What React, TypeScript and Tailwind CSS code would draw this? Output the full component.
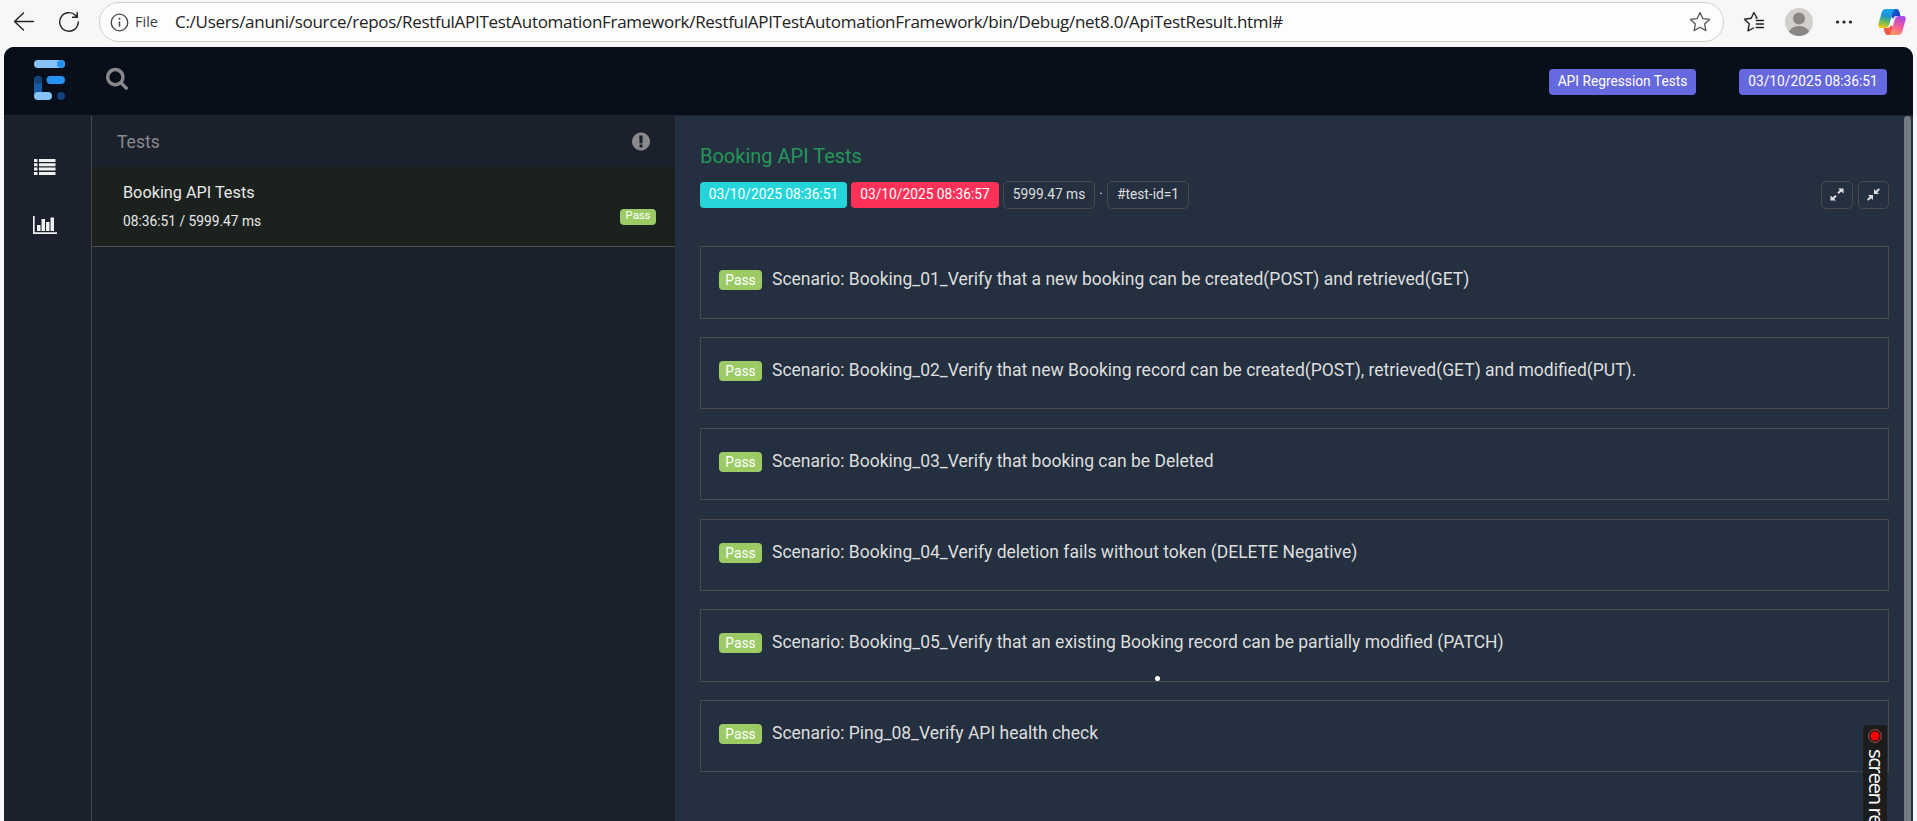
import type { ReactNode } from "react";

const scenarios = [
  "Booking_01_Verify that a new booking can be created(POST) and retrieved(GET)",
  "Booking_02_Verify that new Booking record can be created(POST), retrieved(GET) and modified(PUT).",
  "Booking_03_Verify that booking can be Deleted",
  "Booking_04_Verify deletion fails without token (DELETE Negative)",
  "Booking_05_Verify that an existing Booking record can be partially modified (PATCH)",
  "Ping_08_Verify API health check",
];

const URL_TEXT =
  "C:/Users/anuni/source/repos/RestfulAPITestAutomationFramework/RestfulAPITestAutomationFramework/bin/Debug/net8.0/ApiTestResult.html#";

function Glyph({ d, w, className, fill = "currentColor" }: { d: string; w: number; className: string; fill?: string }) {
  return (
    <svg viewBox={`0 0 ${w} 1792`} className={className} fill={fill}>
      <path d={d} />
    </svg>
  );
}

const SEARCH =
  "M1152 832q0-185-131.500-316.500t-316.500-131.500-316.500 131.500-131.500 316.500 131.500 316.500 316.500 131.500 316.500-131.500 131.500-316.500zm512 832q0 52-38 90t-90 38q-54 0-90-38l-343-342q-179 124-399 124-143 0-273.500-55.500t-225-150-150-225-55.500-273.500 55.500-273.500 150-225 225-150 273.500-55.500 273.500 55.500 225 150 150 225 55.500 273.500q0 220-124 399l343 343q37 37 37 90z";
const EXCLAIM =
  "M768 128q209 0 385.500 103t279.500 279.500 103 385.500-103 385.500-279.500 279.500-385.500 103-385.500-103-279.500-279.500-103-385.500 103-385.500 279.500-279.500 385.500-103zm128 1247v-190q0-14-9-23.500t-22-9.500h-192q-13 0-23 10t-10 23v190q0 13 10 23t23 10h192q13 0 22-9.500t9-23.500zm-2-344l18-621q0-12-10-18-10-8-24-8h-220q-14 0-24 8-10 6-10 18l17 621q0 10 10 17.500t24 7.500h185q14 0 23.500-7.500t10.500-17.500z";

function BrowserBar() {
  return (
    <div className="flex h-[47px] w-full shrink-0 items-start bg-[#f7f7f7] text-[#222]">
      <svg className="ml-[13px] mt-[11px] h-[22px] w-[22px]" viewBox="0 0 22 22" fill="none" stroke="currentColor" strokeWidth="1.4" strokeLinecap="round" strokeLinejoin="round">
        <path d="M20.500 10.500H1.500M10.500 2L1.500 10.500L10.500 19" />
      </svg>
      <svg className="ml-[23px] mt-[11px] h-[22px] w-[22px]" viewBox="0 0 22 22" fill="none" stroke="currentColor" strokeWidth="1.4" strokeLinecap="round" strokeLinejoin="round">
        <path d="M20.300 11A9.300 9.300 0 1 1 17.500 4.300L19 6M19.300 1.500V6.300H14.500" />
      </svg>
      <div className="ml-[19px] mt-[2px] flex h-[40px] w-[1625px] items-center rounded-full border border-[#cfcfcf] bg-[#fdfdfd]">
        <svg className="ml-[10px] h-[19px] w-[19px]" viewBox="0 0 19 19" fill="none" stroke="#444" strokeWidth="1.3">
          <circle cx="9.5" cy="9.5" r="8.300" />
          <path d="M9.500 8.500V13.500" strokeWidth="1.500" />
          <circle cx="9.500" cy="5.800" r="1" fill="#444" stroke="none" />
        </svg>
        <span className="ml-[6px] w-[40px] font-['Open_Sans',sans-serif] text-[14.500px] leading-[20px] font-medium text-[#3c3c3c]">File</span>
        <span className="-mt-px whitespace-nowrap font-['Open_Sans',sans-serif] text-[17px] leading-[24px] tracking-[-0.29px] text-[#222]">{URL_TEXT}</span>
        <svg className="ml-auto mr-[12px] h-[22px] w-[22px]" viewBox="0 0 22 22" fill="none" stroke="#555" strokeWidth="1.300" strokeLinejoin="round">
          <path d="M11 1.500L13.800 7.600L20.500 8.400L15.600 12.900L16.900 19.600L11 16.300L5.100 19.600L6.400 12.900L1.500 8.400L8.200 7.600Z" />
        </svg>
      </div>
      <svg className="ml-[19px] mt-[11px] h-[22px] w-[22px]" viewBox="0 0 22 22" fill="none" stroke="currentColor" strokeWidth="1.400" strokeLinejoin="round" strokeLinecap="round">
        <path d="M13.300 7H14L10.900 1.500L8.200 7.200L1.500 8.200L6.200 12.800L5 19.800L10.500 17M13.300 9.500H20.500M13.300 13H20.500M13.300 16.500H20.500M13.300 7L13.100 7" />
      </svg>
      <svg className="ml-[20px] mt-[8px] h-[28px] w-[28px]" viewBox="0 0 28 28">
        <defs>
          <clipPath id="avatar"><circle cx="14" cy="14" r="14" /></clipPath>
        </defs>
        <circle cx="14" cy="14" r="14" fill="#d2d0cc" />
        <g fill="#8a8683" clipPath="url(#avatar)">
          <circle cx="14" cy="10.500" r="6" />
          <ellipse cx="14" cy="26" rx="10.500" ry="8" />
        </g>
      </svg>
      <svg className="ml-[22px] mt-[19px] h-[6px] w-[18px]" viewBox="0 0 18 6" fill="#222">
        <circle cx="2.500" cy="3" r="1.600" /><circle cx="9" cy="3" r="1.600" /><circle cx="15.500" cy="3" r="1.600" />
      </svg>
      <svg className="ml-[25px] mt-[8px] h-[28px] w-[28px]" viewBox="0 0 28 28">
        <defs>
          <linearGradient id="cpA" x1="0.500" y1="0" x2="0.300" y2="1">
            <stop offset="0" stopColor="#14a8f0" /><stop offset=".35" stopColor="#1a94d8" /><stop offset=".65" stopColor="#5cb860" /><stop offset="1" stopColor="#f0cc10" />
          </linearGradient>
          <linearGradient id="cpB" x1="0.700" y1="0" x2="0.300" y2="1">
            <stop offset="0" stopColor="#a44cf0" /><stop offset=".5" stopColor="#f0589c" /><stop offset="1" stopColor="#ff9a5c" />
          </linearGradient>
          <linearGradient id="cpC" x1="0" y1="0" x2="1" y2="1">
            <stop offset="0" stopColor="#1468d8" /><stop offset="1" stopColor="#1c2fa8" />
          </linearGradient>
        </defs>
        <path d="M13 1H18.500Q20.500 1 21.200 3L22.500 8H18Q16 8 15 11L13 8Z" fill="url(#cpC)" />
        <path d="M15 27H9.500Q7.500 27 7 25L5.500 20H10Q12 20 13 17L16 20Z" fill="#f2584a" />
        <path d="M7.500 1H17Q15.500 1.500 14.500 5L11.500 16Q10.300 20 7.500 20H3Q-.5 20 .5 16L3.500 5Q4.700 1 7.500 1Z" fill="url(#cpA)" />
        <path d="M20.500 27H11Q12.500 26.500 13.500 23L16.500 12Q17.700 8 20.500 8H25Q28.500 8 27.500 12L24.500 23Q23.300 27 20.500 27Z" fill="url(#cpB)" />
      </svg>
    </div>
  );
}

function Logo() {
  return (
    <svg className="h-[40px] w-[31px]" viewBox="0 0 31 40">
      <rect width="31" height="8" rx="4" fill="#85c3f7" />
      <circle cx="27" cy="4" r="4" fill="#2492ee" />
      <rect y="16" width="8" height="22" rx="4" fill="#175ca5" />
      <circle cx="4" cy="20" r="4" fill="#13427d" />
      <rect x="12.500" y="16" width="18.500" height="8" rx="4" fill="#2492ee" />
      <rect y="32" width="18" height="8" rx="4" fill="#85c3f7" />
      <circle cx="27" cy="36" r="4" fill="#13427d" />
    </svg>
  );
}

function HeaderBadge({ children }: { children: ReactNode }) {
  return (
    <span className="flex h-[26px] items-center justify-center rounded bg-[#6668de] pb-[2px] text-[13.75px] leading-[22px] text-white">
      {children}
    </span>
  );
}

function Header() {
  return (
    <header className="flex h-[68px] shrink-0 items-start bg-[#080f1a]">
      <div className="ml-[30px] mt-[13px]"><Logo /></div>
      <div className="ml-[41px] mt-[19px] text-[#898989]">
        <Glyph d={SEARCH} w={1664} className="h-[24px] w-[22px]" />
      </div>
      <div className="ml-auto mr-[26px] mt-[22px] flex gap-[43px]">
        <div className="grid w-[147px]"><HeaderBadge>API Regression Tests</HeaderBadge></div>
        <div className="grid w-[148px]"><HeaderBadge>03/10/2025 08:36:51</HeaderBadge></div>
      </div>
    </header>
  );
}

function NavRail() {
  return (
    <nav className="flex w-[88px] shrink-0 flex-col items-start border-r border-[#4a4a4c] text-[#efefef]">
      <svg className="ml-[30px] mt-[43px] h-[16px] w-[22px]" viewBox="0 0 22 16" fill="currentColor">
        <path d="M0 0h3.500v3H0zM5 0h16.500v3H5zM0 4.300h3.500v3H0zM5 4.300h16.500v3H5zM0 8.600h3.500v3H0zM5 8.600h16.500v3H5zM0 13h3.500v3H0zM5 13h16.500v3H5z" />
      </svg>
      <svg className="ml-[29px] mt-[41px] h-[18px] w-[24px]" viewBox="0 0 24 18" fill="currentColor">
        <path d="M0 0h1.700v16.300H24V18H0zM4 9h3.500v6H4zM8.500 3H12v12H8.500zM13 6h3.500v9H13zM17.500 1.500H21V15h-3.500z" />
      </svg>
    </nav>
  );
}

function TestList() {
  return (
    <aside className="w-[583px] shrink-0">
      <div className="flex h-[51px] items-center justify-between pl-[25px] pr-[25px] text-[#8a8a8c]">
        <span className="text-[17.5px] leading-6">Tests</span>
        <Glyph d={EXCLAIM} w={1536} className="h-[21px] w-[18px]" />
      </div>
      <div className="flex h-[80px] justify-between border-b border-[#4e4f4e] bg-[#1b221e] pl-[31px] pr-[19px] text-[#e8e8e8]">
        <div className="flex flex-col pt-[14px]">
          <span className="text-[16.250px] leading-[24px]">Booking API Tests</span>
          <span className="mt-[6px] text-[13.750px] leading-[20px]">08:36:51 / 5999.47 ms</span>
        </div>
        <span className="mt-[42px] flex h-[16px] w-[36px] items-center justify-center rounded bg-[#9ccb66] pb-[2px] text-[11.250px] leading-none text-white">Pass</span>
      </div>
    </aside>
  );
}

const outlined = "flex h-[28px] items-center justify-center rounded-[5px] border border-[#49494b]";

function Detail() {
  return (
    <main className="flex min-w-0 flex-1 flex-col bg-[#243040] pl-[25px] pr-[24px] text-[#dedede]">
      <h5 className="mt-[26px] text-[20px] leading-[28px] text-[#259658]">Booking API Tests</h5>
      <div className="mt-[11px] flex items-center text-[13.750px] leading-[22px]">
        <span className="flex h-[26px] w-[147px] items-center justify-center rounded bg-[#25d5d9] pb-[2px] text-white">03/10/2025 08:36:51</span>
        <span className="ml-1 flex h-[26px] w-[148px] items-center justify-center rounded bg-[#ff3158] pb-[2px] text-white">03/10/2025 08:36:57</span>
        <span className={`${outlined} ml-1 w-[92px] pb-[2px]`}>5999.47 ms</span>
        <span className="w-[12px] pb-[2px] text-center">·</span>
        <span className={`${outlined} w-[82px] pb-[2px]`}>#test-id=1</span>
        <div className={`${outlined} ml-auto w-[32px]`}>
          <svg className="mb-[2px] h-[13px] w-[14px]" viewBox="0 0 14 13" fill="currentColor" stroke="currentColor">
            <path d="M8 .5H13.500V5.500ZM.5 7.500V12.500H6Z" stroke="none" />
            <path d="M8 5.300L11.500 2M2.500 11L6 7.700" strokeWidth="2" />
          </svg>
        </div>
        <div className={`${outlined} ml-[5px] w-[31px]`}>
          <svg className="mb-[2px] h-[13px] w-[13px]" viewBox="0 0 13 13" fill="currentColor" stroke="currentColor">
            <path d="M7 1V6H12ZM1 7H6V12Z" stroke="none" />
            <path d="M9 4L12.300 .9M.7 12L4 9" strokeWidth="2" />
          </svg>
        </div>
      </div>
      <div className="mt-[37.200px] flex flex-col gap-[18.400px]">
        {scenarios.map((name) => (
          <section key={name} className="flex h-[72.400px] shrink-0 items-start border border-[#49494b] pl-[18px]">
            <span className="mt-[23px] flex h-[20px] w-[43px] items-center justify-center rounded bg-[#9ccb66] text-[13.750px] leading-[20px] text-white">Pass</span>
            <span className="ml-[10px] mt-[20px] whitespace-nowrap text-[17.500px] leading-[24px]">Scenario: {name}</span>
          </section>
        ))}
      </div>
    </main>
  );
}

export default function App() {
  return (
    <div className="relative flex h-[821px] w-[1917px] flex-col overflow-hidden bg-[#f7f7f7] font-['Roboto',sans-serif]">
      <BrowserBar />
      <div className="ml-[4px] flex w-[1909px] flex-1 flex-col overflow-hidden rounded-t-[10px] bg-[#1b212c]">
        <Header />
        <div className="flex flex-1 border-t border-[#1b2430]">
          <NavRail />
          <TestList />
          <Detail />
          <div className="-ml-[9px] mr-[2px] w-[7px] rounded-t bg-[#757a80]" />
        </div>
      </div>
      <span className="absolute left-[1154.500px] top-[676px] h-[5px] w-[5px] rounded-full bg-white" />
      <div className="absolute left-[1863px] top-[725px] flex h-[96px] w-[24px] flex-col items-center rounded-t bg-[#1c1c1c] pt-[4px] text-white">
        <svg className="h-[14px] w-[14px] shrink-0" viewBox="0 0 14 14" fill="none">
          <circle cx="7" cy="7" r="6.400" stroke="#b94a4e" strokeWidth="1" />
          <circle cx="7" cy="7" r="4.500" fill="#ff0000" />
        </svg>
        <span className="ml-[3px] mt-[6px] whitespace-nowrap font-['Open_Sans',sans-serif] text-[20.500px] leading-[24px] font-medium tracking-[-1.500px] [writing-mode:vertical-rl]">screen re</span>
      </div>
    </div>
  );
}
